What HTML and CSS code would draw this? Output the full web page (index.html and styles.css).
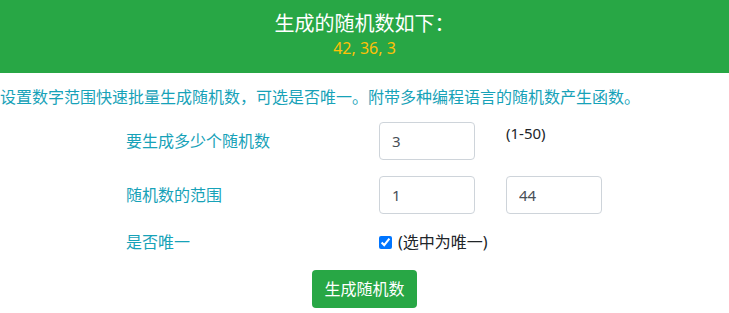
FILE: index.html
```html
<!DOCTYPE html>
<html lang="zh-CN">
<head>
  <meta charset="UTF-8" />
  <meta name="viewport" content="width=device-width, initial-scale=1" />
  <title>随机数生成器</title>
  <link rel="stylesheet" href="styles.css">
</head>
<body>
  <div class="result">
    <h2 class="result-title">生成的随机数如下：</h2>
    <p class="result-numbers">42, 36, 3</p>
  </div>

  <p class="intro">设置数字范围快速批量生成随机数，可选是否唯一。附带多种编程语言的随机数产生函数。</p>

  <form class="generator">
    <div class="row">
      <label class="row-label" for="count">要生成多少个随机数</label>
      <input class="field" id="count" type="text" value="3">
      <span class="hint">(1-50)</span>
    </div>

    <div class="row">
      <label class="row-label" for="min">随机数的范围</label>
      <input class="field" id="min" type="text" value="1">
      <input class="field" id="max" type="text" value="44">
    </div>

    <div class="row row-check">
      <span class="row-label">是否唯一</span>
      <label class="check">
        <input type="checkbox" checked>
        <span>(选中为唯一)</span>
      </label>
    </div>

    <div class="actions">
      <button type="button" class="button">生成随机数</button>
    </div>
  </form>
</body>
</html>
```

FILE: styles.css
```css
* {
  margin: 0;
  padding: 0;
  box-sizing: border-box;
}

body {
  font-family: "Noto Sans", "Noto Sans CJK SC", sans-serif;
  background: #fff;
  color: #212529;
  font-size: 16px;
  line-height: 1.5;
}

.result {
  background: #28a745;
  height: 73px;
  text-align: center;
  padding-top: 10px;
}

.result-title {
  color: #fff;
  font-size: 20px;
  font-weight: 400;
  line-height: 28px;
}

.result-numbers {
  color: #ffc107;
  font-size: 16px;
  line-height: 20px;
}

.intro {
  color: #17a2b8;
  font-size: 16px;
  line-height: 24px;
  margin-top: 12px;
}

.generator {
  margin-top: 13px;
  display: flex;
  flex-direction: column;
  gap: 16px;
}

.row {
  display: grid;
  grid-template-columns: 222px 96px 96px;
  column-gap: 31px;
  align-items: center;
  padding-left: 126px;
  min-height: 38px;
}

.row-label {
  color: #17a2b8;
  font-size: 16px;
  line-height: 24px;
}

.field {
  width: 96px;
  height: 38px;
  padding: 0 12px;
  border: 1px solid #ced4da;
  border-radius: 4px;
  font-family: inherit;
  font-size: 15px;
  color: #495057;
  background: #fff;
}

.hint {
  align-self: start;
  font-size: 15px;
  line-height: 22px;
}

.row-check {
  min-height: 24px;
}

.check {
  grid-column: 2 / 4;
  display: flex;
  align-items: center;
  font-size: 16px;
  line-height: 24px;
}

.check input {
  width: 13px;
  height: 13px;
  margin: 0 6px 0 0;
}

.actions {
  display: flex;
  justify-content: center;
}

.button {
  background: #28a745;
  color: #fff;
  border: none;
  border-radius: 4px;
  padding: 7px 12px;
  font-family: inherit;
  font-size: 16px;
  line-height: 24px;
  cursor: pointer;
}
```
